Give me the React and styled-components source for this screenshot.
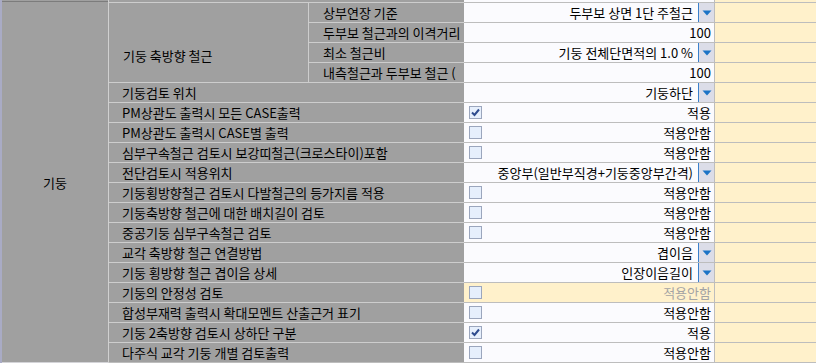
import React from "react";
import styled, { createGlobalStyle } from "styled-components";

const GlobalStyle = createGlobalStyle`
  *, *::before, *::after { box-sizing: border-box; }
  html, body { margin: 0; padding: 0; background: #ffffff; }
  body {
    font-family: "Noto Sans CJK KR", "Noto Sans", sans-serif;
    font-size: 13px;
    color: #000;
  }
`;

const GRAY = "#a0a0a0";
const WHITE = "#fbfbfe";
const YELLOW = "#fff1cb";
const LABEL_LINE = "#cdcdcd";
const VALUE_LINE = "#bdbdbd";

const Sheet = styled.div`
  display: flex;
  width: 816px;
  height: 363px;
  overflow: hidden;
`;

const LeftStrip = styled.div`
  width: 2px;
  flex-shrink: 0;
  background: #a9abc5;
`;

const GroupColumn = styled.div`
  width: 107px;
  flex-shrink: 0;
  display: flex;
  flex-direction: column;
  background: ${GRAY};
  border-right: 1px solid #d0d0d0;
`;

const GroupCell = styled.div`
  flex: 1;
  margin-top: 1px;
  border-top: 1px solid #7c7c7c;
  border-bottom: 1px solid #d4d4d8;
  display: flex;
  align-items: center;
  justify-content: center;
`;

const RightColumn = styled.div`
  flex: 1;
  display: flex;
  flex-direction: column;
`;

const Rows = styled.div`
  display: flex;
  flex-direction: column;
  border-bottom: 1px solid ${VALUE_LINE};
`;

const PrevRow = styled.div`
  display: grid;
  grid-template-columns: 355px 251px 1fr;
  height: 2px;
`;

const PrevCell = styled.div`
  background: ${(p) => p.$bg};
  border-right: ${(p) => (p.$divider ? `1px solid ${VALUE_LINE}` : "none")};
`;

const SubGroup = styled.div`
  display: flex;
`;

const SubGroupLabel = styled.div`
  width: 200px;
  flex-shrink: 0;
  background: ${GRAY};
  border-top: 1px solid ${LABEL_LINE};
  border-right: 1px solid ${LABEL_LINE};
  display: flex;
  align-items: flex-end;
  padding: 0 0 17px 14px;
  white-space: nowrap;
`;

const SubRows = styled.div`
  flex: 1;
  display: flex;
  flex-direction: column;
`;

const Row = styled.div`
  display: grid;
  grid-template-columns: ${(p) => p.$labelWidth}px 251px 1fr;
  height: 20px;
`;

const Label = styled.div`
  background: ${GRAY};
  border-top: 1px solid ${LABEL_LINE};
  padding-left: ${(p) => p.$indent}px;
  line-height: 19px;
  white-space: nowrap;
  overflow: hidden;
`;

const Value = styled.div`
  background: ${(p) => (p.$disabled ? YELLOW : WHITE)};
  color: ${(p) => (p.$disabled ? "#a3a3a3" : "#000")};
  border-top: 1px solid ${VALUE_LINE};
  border-right: 1px solid ${VALUE_LINE};
  display: flex;
  align-items: center;
  padding-right: ${(p) => (p.$dropdown ? 0 : 3)}px;
  white-space: nowrap;
  overflow: hidden;
`;

const ValueText = styled.span`
  flex: 1;
  text-align: right;
  line-height: 19px;
  padding-right: ${(p) => (p.$dropdown ? 5 : 0)}px;
`;

const Extra = styled.div`
  background: ${YELLOW};
  border-top: 1px solid ${VALUE_LINE};
`;

const DropButton = styled.div`
  width: 16px;
  height: 100%;
  flex-shrink: 0;
  background: #dcdde8;
  border-left: 1px solid #3a80cc;
  display: flex;
  align-items: center;
  justify-content: center;
`;

const CheckBox = styled.div`
  width: 13px;
  height: 13px;
  margin-left: 5px;
  flex-shrink: 0;
  border: 1px solid #9ba6bd;
  background: #e6effc;
  display: flex;
  align-items: center;
  justify-content: center;
`;

const Arrow = () => (
  <svg width="10" height="6" viewBox="0 0 10 6">
    <polygon points="0.5,0.5 9.5,0.5 5,5.5" fill="#1c74c6" />
  </svg>
);

const Check = () => (
  <svg width="11" height="11" viewBox="0 0 11 11">
    <polyline
      points="2,5.5 4.5,8 9,2.5"
      fill="none"
      stroke="#2d4b8e"
      strokeWidth="2"
    />
  </svg>
);

function ValueCell({ value }) {
  const { text, dropdown, check, checked, disabled } = value;
  return (
    <Value $dropdown={dropdown} $disabled={disabled}>
      {check && <CheckBox>{checked && <Check />}</CheckBox>}
      <ValueText $dropdown={dropdown}>{text}</ValueText>
      {dropdown && (
        <DropButton>
          <Arrow />
        </DropButton>
      )}
    </Value>
  );
}

function PropRow({ label, value, labelWidth, indent }) {
  return (
    <Row $labelWidth={labelWidth}>
      <Label $indent={indent}>{label}</Label>
      <ValueCell value={value} />
      <Extra />
    </Row>
  );
}

const subRows = [
  { label: "상부연장 기준", value: { text: "두부보 상면 1단 주철근", dropdown: true } },
  { label: "두부보 철근과의 이격거리", value: { text: "100" } },
  { label: "최소 철근비", value: { text: "기둥 전체단면적의 1.0 %", dropdown: true } },
  { label: "내측철근과 두부보 철근 (", value: { text: "100" } },
];

const N = (checked) => ({ text: checked ? "적용" : "적용안함", check: true, checked });

const mainRows = [
  { label: "기둥검토 위치", value: { text: "기둥하단", dropdown: true } },
  { label: "PM상관도 출력시 모든 CASE출력", value: N(true) },
  { label: "PM상관도 출력시 CASE별 출력", value: N(false) },
  { label: "심부구속철근 검토시 보강띠철근(크로스타이)포함", value: N(false) },
  { label: "전단검토시 적용위치", value: { text: "중앙부(일반부직경+기둥중앙부간격)", dropdown: true } },
  { label: "기둥횡방향철근 검토시 다발철근의 등가지름 적용", value: N(false) },
  { label: "기둥축방향 철근에 대한 배치길이 검토", value: N(false) },
  { label: "중공기둥 심부구속철근 검토", value: N(false) },
  { label: "교각 축방향 철근 연결방법", value: { text: "겹이음", dropdown: true } },
  { label: "기둥 횡방향 철근 겹이음 상세", value: { text: "인장이음길이", dropdown: true } },
  { label: "기둥의 안정성 검토", value: { ...N(false), disabled: true } },
  { label: "합성부재력 출력시 확대모멘트 산출근거 표기", value: N(false) },
  { label: "기둥 2축방향 검토시 상하단 구분", value: N(true) },
  { label: "다주식 교각 기둥 개별 검토출력", value: N(false) },
];

export default function App() {
  return (
    <>
      <GlobalStyle />
      <Sheet>
        <LeftStrip />
        <GroupColumn>
          <GroupCell>기둥</GroupCell>
        </GroupColumn>
        <RightColumn>
          <PrevRow>
            <PrevCell $bg={GRAY} />
            <PrevCell $bg={WHITE} $divider />
            <PrevCell $bg={YELLOW} />
          </PrevRow>
          <Rows>
            <SubGroup>
              <SubGroupLabel>기둥 축방향 철근</SubGroupLabel>
              <SubRows>
                {subRows.map((r) => (
                  <PropRow key={r.label} label={r.label} value={r.value} labelWidth={155} indent={14} />
                ))}
              </SubRows>
            </SubGroup>
            {mainRows.map((r) => (
              <PropRow key={r.label} label={r.label} value={r.value} labelWidth={355} indent={13} />
            ))}
          </Rows>
        </RightColumn>
      </Sheet>
    </>
  );
}
